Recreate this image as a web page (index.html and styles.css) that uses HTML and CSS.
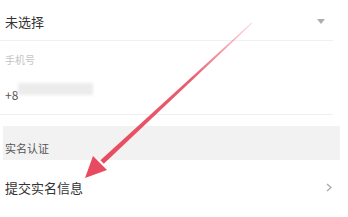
FILE: index.html
```html
<!DOCTYPE html>
<html lang="zh-CN">
<head>
    <meta charset="UTF-8">
    <meta name="viewport" content="width=device-width, initial-scale=1.0">
    <title>账号信息</title>
    <link rel="stylesheet" href="styles.css">
</head>
<body>
    <div class="page">
        <div class="row select-row">
            <span class="value">未选择</span>
            <svg class="caret" width="8" height="5" viewBox="0 0 8 5"><path d="M0 0 L8 0 L4 5 Z" fill="#999"/></svg>
        </div>
        <div class="field">
            <div class="label">手机号</div>
            <div class="phone">
                <span class="value">+8</span>
                <span class="mask"></span>
            </div>
        </div>
        <div class="section">实名认证</div>
        <div class="row link-row">
            <span class="value">提交实名信息</span>
            <svg class="chevron" width="6" height="9" viewBox="0 0 6 9"><path d="M1 1 L5 4.5 L1 8" fill="none" stroke="#aaa" stroke-width="1.3"/></svg>
        </div>
    </div>

    <!-- annotation arrow drawn over the page -->
    <svg class="arrow" width="348" height="217" viewBox="0 0 348 217">
        <defs>
            <linearGradient id="fade" x1="252" y1="22" x2="100" y2="165" gradientUnits="userSpaceOnUse">
                <stop offset="0" stop-color="#e84a5f" stop-opacity="0.2"/>
                <stop offset="0.4" stop-color="#e84a5f" stop-opacity="0.9"/>
                <stop offset="1" stop-color="#e84a5f"/>
            </linearGradient>
        </defs>
        <path d="M251.6 22.4 L252.4 23.2 L103.8 163.8 L100.4 160.2 Z" fill="url(#fade)"/>
        <path d="M85 178 L93 156 L107 170 Z" fill="#e84a5f"/>
    </svg>
</body>
</html>
```

FILE: styles.css
```css
body {
    margin: 0;
    padding: 0;
    background-color: #fff;
    font-family: "Noto Sans CJK SC", "Noto Sans", sans-serif;
    color: #333;
    width: 348px;
    height: 217px;
    overflow: hidden;
    position: relative;
}
.page {
    padding-top: 2px;
}
.row {
    display: flex;
    align-items: center;
    justify-content: space-between;
    padding: 0 15px 0 5px;
}
.value {
    font-size: 13px;
    color: #333;
}
.select-row {
    height: 38px;
    margin-right: 15px;
    padding-right: 8px;
    border-bottom: 1px solid #f0f0f0;
}
.caret {
    opacity: 0.8;
}
.field {
    padding: 12px 0 0 5px;
    margin-right: 15px;
    border-bottom: 1px solid #f0f0f0;
}
.label {
    font-size: 10px;
    color: #c4c4c4;
    line-height: 14px;
}
.phone {
    display: flex;
    align-items: center;
    height: 47px;
}
.phone .value {
    font-size: 12px;
    color: #555;
    margin-top: 8px;
}
.mask {
    display: block;
    width: 75px;
    height: 12px;
    margin-top: -4px;
    background-color: #ececec;
    filter: blur(1.5px);
}
.section {
    margin: 11px 8px 0 3px;
    height: 34px;
    padding: 0 0 4px 2px;
    display: flex;
    align-items: flex-end;
    box-sizing: border-box;
    background-color: #f2f2f2;
    font-size: 11px;
    color: #555;
}
.link-row {
    height: 54px;
    padding-right: 16px;
}
.arrow {
    position: absolute;
    left: 0;
    top: 0;
}
```
